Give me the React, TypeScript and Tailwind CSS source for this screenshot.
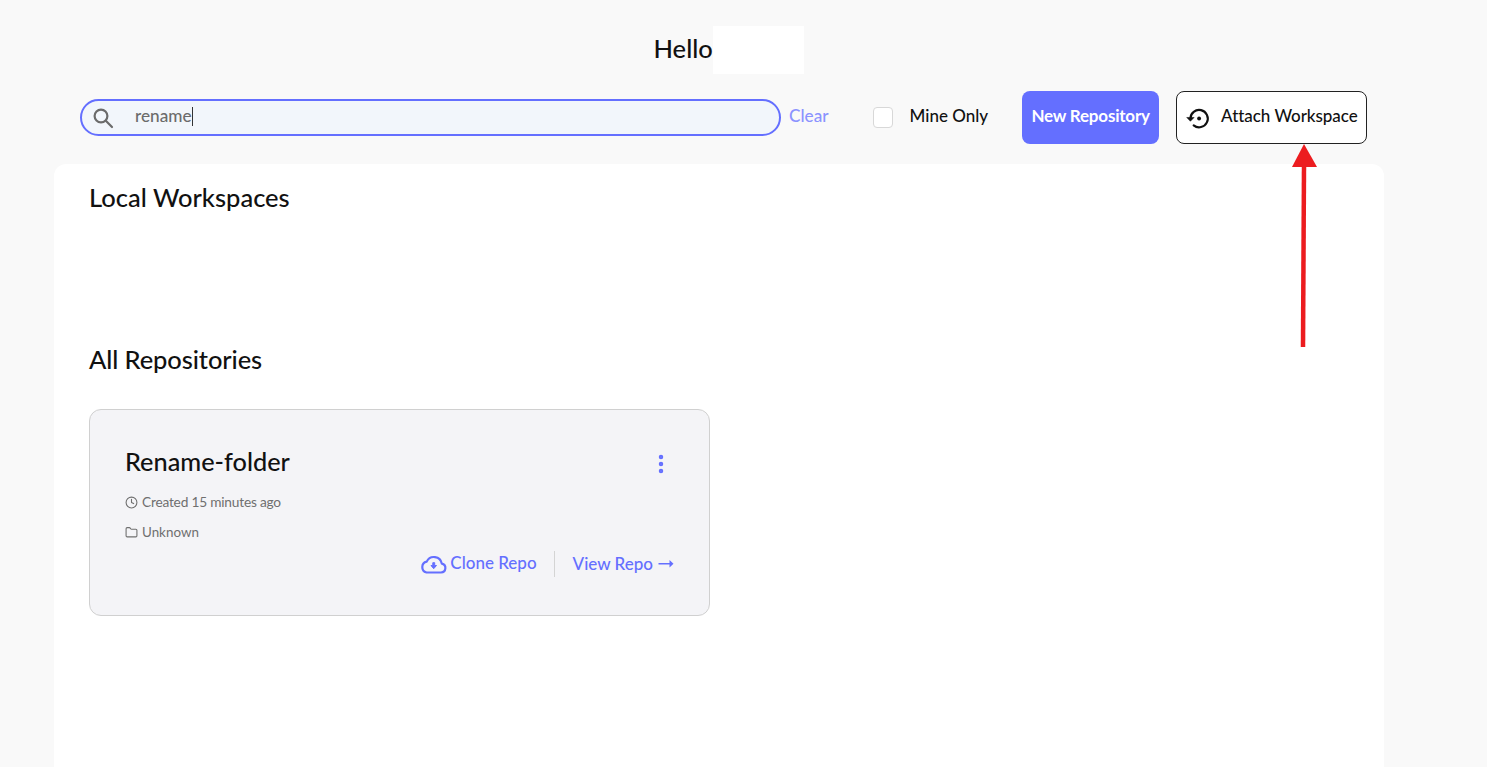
import { MoreVertical, Clock, Folder } from "lucide-react";

function SearchIcon() {
    return <svg width="22" height="22" viewBox="0 0 22 22" fill="none" stroke="#6b6b6b" strokeWidth="2.2">
        <circle cx="9" cy="9" r="6.4" />
        <path d="M13.8 13.8 L20 20" strokeLinecap="round" />
    </svg>
}

function RestoreIcon() {
    return <svg width="26" height="26" viewBox="0 0 24 24" fill="none" stroke="#111" strokeWidth="2">
        <path d="M5 12.5a8 8 0 1 1 3 6.3" strokeLinecap="round" />
        <path d="M1.6 11.5 L5 15 L8.4 11.5 Z" fill="#111" strokeWidth="0.5" />
        <circle cx="13" cy="12.5" r="1.8" fill="#111" stroke="none" />
    </svg>
}

function CloudIcon() {
    return <svg width="28" height="20" viewBox="0 0 27 20" fill="none" stroke="#646fff" strokeWidth="2.2">
        <path d="M7 18.5h14.5a4.5 4.5 0 0 0 .8-8.9A8 8 0 0 0 7.2 7.6 5.6 5.6 0 0 0 7 18.5Z" strokeLinejoin="round" />
        <path d="M11.5 11.5h1.8V8.7h1.9v2.8H17l-2.8 3.2Z" fill="#646fff" stroke="#646fff" strokeWidth="1" strokeLinejoin="round" />
    </svg>
}

function RedArrow() {
    return <svg className="absolute left-[1285px] top-[142px]" width="36" height="208" viewBox="0 0 36 208">
        <path d="M19 2 L32 25 L7 25 Z" fill="#ec1c1f" />
        <path d="M19 24 L18 205" stroke="#ec1c1f" strokeWidth="4.5" fill="none" />
    </svg>
}

function RepoCard() {
    return <div className="w-[621px] h-[207px] bg-[#f4f4f7] border border-[#d0d0d0] rounded-xl pl-[35px] pr-[35px] pt-[33px] flex flex-col">
        <div className="flex justify-between items-center h-[36px]">
            <h3 className="text-[25.3px] font-medium leading-[36px] text-[#111]">Rename-folder</h3>
            <MoreVertical className="w-[24px] h-[24px] text-[#646fff] mr-[1px] mt-[6px]" strokeWidth={2.5} />
        </div>
        <div className="flex items-center gap-[4px] mt-[13px] text-[13.7px] leading-[20px] text-[#6f6f6f]">
            <Clock className="w-[13px] h-[13px]" />
            <span className="tracking-[-0.2px]">Created 15 minutes ago</span>
        </div>
        <div className="flex items-center gap-[4px] mt-[10px] text-[13.4px] leading-[20px] text-[#6f6f6f]">
            <Folder className="w-[13px] h-[13px]" />
            <span>Unknown</span>
        </div>
        <div className="flex justify-end items-center mt-[9px] text-[#646fff] text-[17px] font-medium">
            <div className="flex items-center gap-[3px] pr-[17px] border-r border-[#d4d4d4] h-[26px]">
                <CloudIcon />
                <span className="mb-[2px]">Clone Repo</span>
            </div>
            <div className="flex items-center gap-[5px] pl-[18px]">
                <span>View Repo</span>
                <svg width="16" height="10" viewBox="0 0 15 10" fill="#646fff">
                    <path d="M0 4h11V1l4 3.8-4 3.8V5.6H0Z" />
                </svg>
            </div>
        </div>
    </div>
}

export default function App() {
    return <div className="relative h-[767px] overflow-hidden bg-[#f9f9f9] font-['Lato',sans-serif] text-[#111]">
        <div className="flex justify-center pt-[30px] pb-[2px]">
            <h1 className="text-[25.5px] font-medium leading-[36px] w-[179px] ml-[-1px] text-left">Hello</h1>
        </div>

        <div className="absolute left-[713px] top-[26px] w-[91px] h-[48px] bg-white"></div>

        <div className="flex items-center mt-[23px] pl-[80px] h-[53px]">
            <div className="w-[701px] h-[37px] border-2 border-[#646fff] rounded-full bg-[#f2f6fb] flex items-center pl-[10px]">
                <SearchIcon />
                <span className="ml-[21px] mb-[4px] text-[17.2px] font-medium text-[#6b6b6b]">rename</span>
                <span className="w-px h-[19px] mb-[2px] bg-[#333]"></span>
            </div>
            <span className="ml-[8px] mb-[4px] text-[17.2px] font-medium text-[#8b93ff]">Clear</span>
            <div className="ml-[44px] w-[20px] h-[21px] bg-white border border-[#d8d8d8] rounded"></div>
            <span className="ml-[17px] mb-[4px] text-[17px] font-medium">Mine Only</span>
            <button className="ml-[34px] w-[137px] h-[53px] pb-[4px] bg-[#646fff] rounded-lg text-white text-[17px] font-bold tracking-[-0.2px]">New Repository</button>
            <button className="ml-[17px] w-[191px] h-[53px] bg-white border border-[#222] rounded-lg flex items-center pl-[8px] gap-[10px] text-[17px] font-medium tracking-[-0.05px]">
                <RestoreIcon />
                <span className="mb-[4px]">Attach Workspace</span>
            </button>
        </div>

        <div className="ml-[54px] mt-[20px] w-[1330px] h-[650px] bg-white rounded-t-xl pl-[35px] pt-[15px]">
            <h2 className="text-[25.5px] font-medium leading-[36px]">Local Workspaces</h2>
            <h2 className="text-[25.5px] font-medium leading-[36px] mt-[126px] tracking-[-0.1px]">All Repositories</h2>
            <div className="mt-[32px]">
                <RepoCard />
            </div>
        </div>

        <RedArrow />
    </div>
}
